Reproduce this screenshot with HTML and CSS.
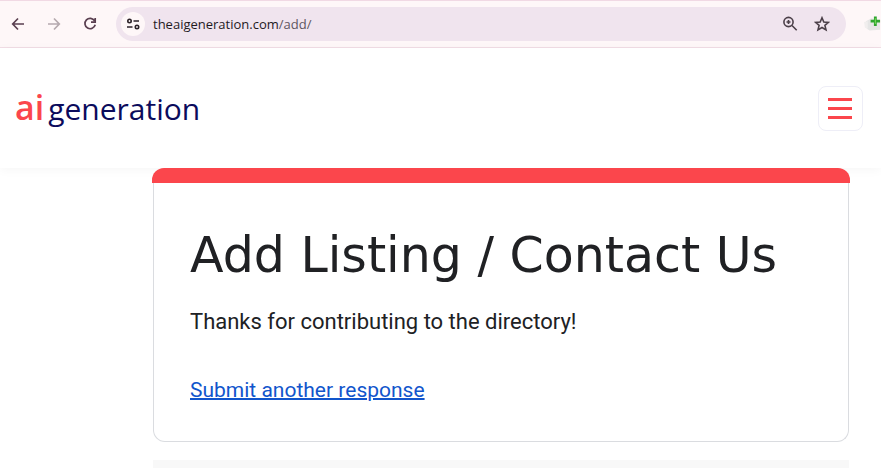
FILE: index.html
```html
<!DOCTYPE html>
<html lang="en">
<head>
    <meta charset="UTF-8">
    <meta name="viewport" content="width=device-width, initial-scale=1.0">
    <title>Add Listing / Contact Us</title>
    <link rel="stylesheet" href="styles.css">
</head>
<body>
    <div class="toolbar">
        <button class="nav-button" aria-label="Back">
            <svg width="16" height="16" viewBox="0 0 16 16"><path d="M14 8H3M8 2.500L2.700 8 8 13.500"/></svg>
        </button>
        <button class="nav-button" aria-label="Forward" disabled>
            <svg width="16" height="16" viewBox="0 0 16 16"><path d="M2 8h11M8 2.500L13.300 8 8 13.500"/></svg>
        </button>
        <button class="nav-button" aria-label="Reload">
            <svg width="16" height="16" viewBox="0 0 16 16"><path d="M12.600 4.800A5.200 5.200 0 1 0 13.200 8.800M13.200 2v4.200H9"/></svg>
        </button>
        <div class="address-bar">
            <button class="site-info" aria-label="View site information">
                <svg width="14" height="14" viewBox="0 0 14 14"><circle cx="3.500" cy="4" r="1.700"/><path d="M7.500 4H13M1 10h5.500"/><circle cx="11" cy="10" r="1.700"/></svg>
            </button>
            <a class="url" href="#">theaigeneration.com<span class="url-path">/add/</span></a>
            <button class="bar-button" aria-label="Zoom">
                <svg width="16" height="16" viewBox="0 0 16 16"><circle cx="6.500" cy="6" r="4.600"/><path d="M10 9.500l4.700 4.700M6.500 4v4M4.500 6h4"/></svg>
            </button>
            <button class="bar-button" aria-label="Bookmark this page">
                <svg width="16" height="16" viewBox="0 0 16 16"><path d="M8 1.800l1.800 4.200 4.600.4-3.500 3 1.100 4.500L8 11.500l-4 2.400 1.100-4.500-3.500-3 4.600-.4z"/></svg>
            </button>
        </div>
        <button class="extension" aria-label="Add to directory">
            <svg width="18" height="16" viewBox="0 0 18 16">
                <path d="M2 5l6-3 9 3v9l-11 1-3-2z" fill="#e6e6e6"/>
                <path d="M0 6l4-1v8l-3-1z" fill="#f1eeee"/>
                <path d="M10.500 0h3v3.500H17v3h-3.500V10h-3V6.500H7v-3h3.500z" fill="#2fa52f"/>
                <path d="M11.500 2h1v6h-1z" fill="#7fe05a"/>
            </svg>
        </button>
    </div>

    <header class="site-header">
        <a class="logo" href="#"><span class="logo-ai">ai</span>generation</a>
        <button class="menu-button" aria-label="Menu">
            <span class="menu-line"></span>
            <span class="menu-line"></span>
            <span class="menu-line"></span>
        </button>
    </header>

    <main class="form-page">
        <div class="banner"></div>
        <section class="card">
            <h1>Add Listing / Contact Us</h1>
            <p>Thanks for contributing to the directory!</p>
            <a class="another" href="#">Submit another response</a>
        </section>
        <div class="form-footer"></div>
    </main>
</body>
</html>
```
FILE: styles.css
```css
* {
    margin: 0;
    padding: 0;
    box-sizing: border-box;
}
body {
    display: flex;
    flex-direction: column;
    min-height: 100vh;
    background-color: #fff;
    font-family: Roboto, sans-serif;
    color: #202124;
}
button {
    display: flex;
    align-items: center;
    justify-content: center;
    border: none;
    background: none;
    cursor: pointer;
}
svg {
    display: block;
    fill: none;
}

/* Browser toolbar */
.toolbar {
    display: flex;
    align-items: center;
    height: 48px;
    padding-left: 10px;
    background-color: #fef7f8;
    border-top: 1px solid #f1d9e4;
    border-bottom: 1px solid #f1dde5;
}
.nav-button {
    width: 16px;
    height: 16px;
    margin-right: 20px;
    stroke: #5a3f50;
    stroke-width: 1.7;
}
.nav-button:disabled {
    stroke: #b5a9ae;
}
.address-bar {
    display: flex;
    flex: 1;
    align-items: center;
    height: 34px;
    margin-left: -2px;
    margin-right: 18px;
    padding: 0 16px 0 5px;
    border-radius: 17px;
    background-color: #f0e4ee;
}
.site-info {
    width: 24px;
    height: 24px;
    border-radius: 50%;
    background-color: #fef7f8;
    stroke: #2b2228;
    stroke-width: 1.6;
}
.url {
    flex: 1;
    margin-left: 8px;
    font-family: "Open Sans", sans-serif;
    font-size: 13px;
    color: #1f1a1e;
    text-decoration: none;
}
.url-path {
    color: #5f5560;
}
.bar-button {
    margin-left: 16px;
    stroke: #4b3f48;
    stroke-width: 1.6;
}
.extension {
    width: 17px;
    overflow: hidden;
}

/* Site header */
.site-header {
    display: flex;
    align-items: center;
    justify-content: space-between;
    height: 120px;
    padding: 0 18px 0 15px;
    box-shadow: 0 2px 10px rgba(0,0,0,0.04);
}
.logo {
    padding-bottom: 2px;
    font-family: "Open Sans", sans-serif;
    font-size: 30px;
    font-weight: 400;
    color: #0b0b5c;
    text-decoration: none;
}
.logo-ai {
    margin-right: 4px;
    font-size: 34px;
    font-weight: 600;
    color: #fb464c;
}
.menu-button {
    flex-direction: column;
    gap: 6px;
    width: 45px;
    height: 45px;
    padding-right: 1px;
    border: 1px solid #eeeef7;
    border-radius: 8px;
}
.menu-line {
    width: 24px;
    height: 3px;
    background-color: #fb464c;
}

/* Form response */
.form-page {
    display: flex;
    flex: 1;
    flex-direction: column;
    padding: 0 31px 0 152px;
}
.banner {
    position: relative;
    height: 15px;
    border-radius: 12px 12px 0 0;
    background-color: #fb464c;
}
.card {
    margin: 0 1px;
    padding: 38px 36px 35px;
    border: 1px solid #dadce0;
    border-top: none;
    border-radius: 0 0 12px 12px;
}
h1 {
    font-family: "DejaVu Sans", sans-serif;
    font-size: 49px;
    font-weight: 400;
    line-height: 70px;
}
p {
    margin-top: 15px;
    font-size: 22px;
    line-height: 32px;
}
.another {
    display: inline-block;
    margin-top: 36px;
    font-size: 21px;
    line-height: 32px;
    color: #1155cc;
    text-decoration-thickness: 2px;
}
.form-footer {
    flex: 1;
    margin: 18px 1px 0;
    background-color: #f8f8f8;
}
```
